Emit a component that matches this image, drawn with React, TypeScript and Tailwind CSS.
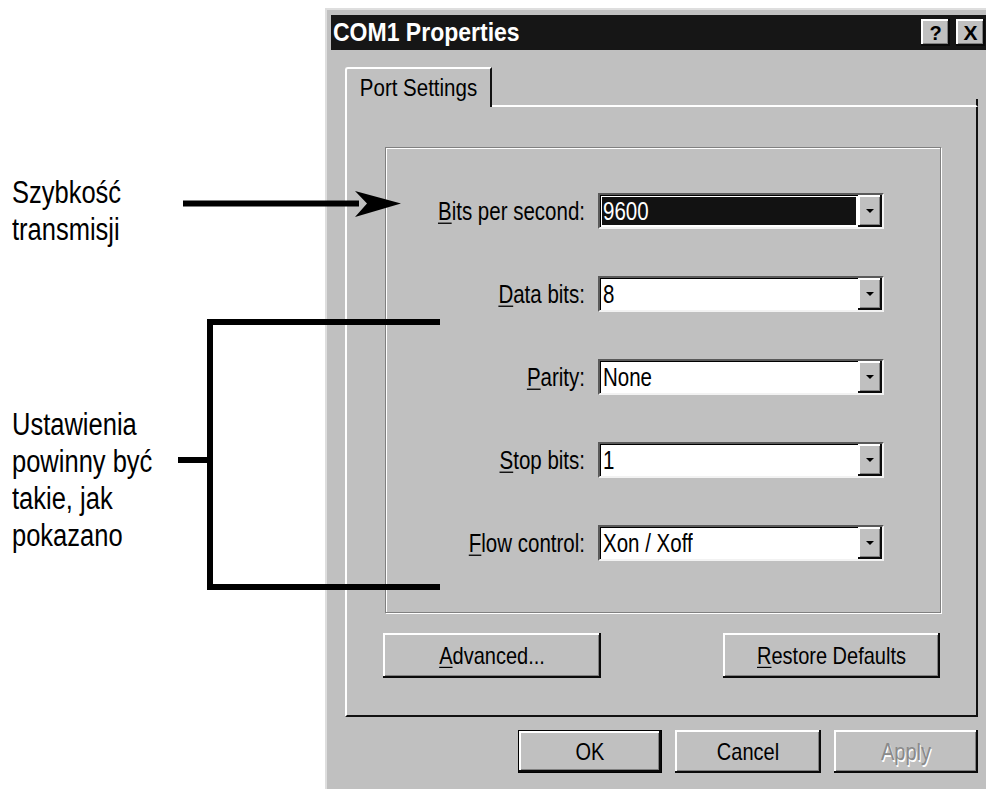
import type { ReactNode } from "react";

const raised =
  "bg-[#c0c0c0] shadow-[inset_-2px_-2px_0_#0a0a0a,inset_2px_2px_0_#ffffff,inset_-3px_-3px_0_#808080]";

function Tall({ children }: { children: ReactNode }) {
  return <span className="inline-block scale-y-[1.25]">{children}</span>;
}

function Lbl({ children }: { children: ReactNode }) {
  return <span className="inline-block scale-y-[1.3]">{children}</span>;
}

function U({ children }: { children: ReactNode }) {
  return <span className="underline decoration-1 underline-offset-2">{children}</span>;
}

interface Row {
  key: string;
  rest: string;
  value: string;
  selected?: boolean;
}

const rows: Row[] = [
  { key: "B", rest: "its per second:", value: "9600", selected: true },
  { key: "D", rest: "ata bits:", value: "8" },
  { key: "P", rest: "arity:", value: "None" },
  { key: "S", rest: "top bits:", value: "1" },
  { key: "F", rest: "low control:", value: "Xon / Xoff" },
];

function Combo({ value, selected }: { value: string; selected?: boolean }) {
  return (
    <div className="w-[286px] h-[36px] flex bg-white border-2 border-t-[#5a5a5a] border-l-[#5a5a5a] border-b-[#f2f2f2] border-r-[#f2f2f2] shadow-[inset_1px_1px_0_#000]">
      {selected ? (
        <div className="flex-1 m-[2px] bg-[#121212] text-white flex items-center pl-[1px]">
          <Lbl>{value}</Lbl>
        </div>
      ) : (
        <div className="flex-1 flex items-center pl-[3px]">
          <Lbl>{value}</Lbl>
        </div>
      )}
      <div className={`w-[24px] flex items-center justify-center ${raised}`}>
        <div className="w-0 h-0 border-l-[4px] border-r-[4px] border-t-[4px] border-l-transparent border-r-transparent border-t-black" />
      </div>
    </div>
  );
}

export default function App() {
  return (
    <div className="relative w-[986px] h-[789px] overflow-hidden bg-white flex font-['Liberation_Sans',Arial,sans-serif] text-black">
      {/* annotations */}
      <div className="w-[325px] shrink-0 pl-[12px] text-[25.5px] leading-[37px]">
        <div className="pt-[174px]">
          <div><Tall>Szybkość</Tall></div>
          <div><Tall>transmisji</Tall></div>
        </div>
        <div className="mt-[158px]">
          <div><Tall>Ustawienia</Tall></div>
          <div><Tall>powinny być</Tall></div>
          <div><Tall>takie, jak</Tall></div>
          <div><Tall>pokazano</Tall></div>
        </div>
      </div>

      {/* dialog */}
      <div className="mt-[8px] w-[670px] h-[781px] shrink-0 bg-[#c0c0c0] border-l-2 border-t-2 border-[#dedede] pl-[4px] pt-[5px]">
        <div className="h-[35px] w-[658px] bg-[#161616] flex items-center justify-between pl-[2px] pr-[4px]">
          <span className="text-white font-bold text-[23px] inline-block scale-y-[1.15]">COM1 Properties</span>
          <div className="flex gap-[6px]">
            <div className={`w-[29px] h-[27px] flex items-center justify-center font-bold text-[20px] ${raised}`}>?</div>
            <div className={`w-[29px] h-[27px] flex items-center justify-center font-bold text-[21px] ${raised}`}>X</div>
          </div>
        </div>

        <div className="pl-[14px]">
          <div className="w-[633px] mt-[17px] h-[40px] flex items-end">
            <div className="w-[147px] h-[40px] border-l-2 border-t-2 border-white border-r-2 border-r-[#111] rounded-tl-[3px] flex items-center justify-center text-[20.5px]">
              <span className="inline-block scale-y-[1.15]">Port Settings</span>
            </div>
            <div className="flex-1 border-b-2 border-white border-r-2 border-r-[#111] h-[8px]" />
          </div>

          <div className="w-[633px] h-[610px] border-l-2 border-white border-r-2 border-r-[#111] border-b-2 border-b-[#111] pl-[38px] pt-[40px]">
            <div className="w-[556px] h-[466px] border border-[#808080] shadow-[inset_1px_1px_0_#fff,1px_1px_0_#fff] flex flex-col pt-[45px] gap-[47px] text-[20.5px]">
              {rows.map((r) => (
                <div key={r.key} className="flex items-center h-[36px] gap-[13px]">
                  <div className="w-[199px] text-right">
                    <Lbl>
                      <U>{r.key}</U>
                      {r.rest}
                    </Lbl>
                  </div>
                  <Combo value={r.value} selected={r.selected} />
                </div>
              ))}
            </div>

            <div className="mt-[20px] -ml-[2px] w-[557px] flex justify-between text-[20px]">
              <button className={`w-[218px] h-[45px] flex items-center justify-center ${raised}`}>
                <span className="inline-block scale-y-[1.2]"><U>A</U>dvanced...</span>
              </button>
              <button className={`w-[217px] h-[45px] flex items-center justify-center ${raised}`}>
                <span className="inline-block scale-y-[1.2]"><U>R</U>estore Defaults</span>
              </button>
            </div>
          </div>

          <div className="w-[633px] mt-[13px] flex justify-end gap-[13px] text-[20px]">
            <button className={`w-[144px] h-[43px] border border-black flex items-center justify-center ${raised}`}>
              <span className="inline-block scale-y-[1.2]">OK</span>
            </button>
            <button className={`w-[146px] h-[43px] flex items-center justify-center ${raised}`}>
              <span className="inline-block scale-y-[1.2]">Cancel</span>
            </button>
            <button className={`w-[144px] h-[43px] flex items-center justify-center text-[#8a8a8a] [text-shadow:1px_1px_0_#fff] ${raised}`}>
              <span className="inline-block scale-y-[1.2]">Apply</span>
            </button>
          </div>
        </div>
      </div>

      {/* arrow and bracket drawn over the dialog */}
      <svg className="absolute inset-0 pointer-events-none" width="986" height="789" viewBox="0 0 986 789">
        <rect x="183" y="200.5" width="176" height="6" fill="#000" />
        <path d="M401 203.5 L355 191 L367 203.5 L355 217 Z" fill="#000" />
        <path d="M440 322 H210 V587 H440" fill="none" stroke="#000" strokeWidth="6" />
        <path d="M178 460 H210" fill="none" stroke="#000" strokeWidth="6" />
      </svg>
    </div>
  );
}
